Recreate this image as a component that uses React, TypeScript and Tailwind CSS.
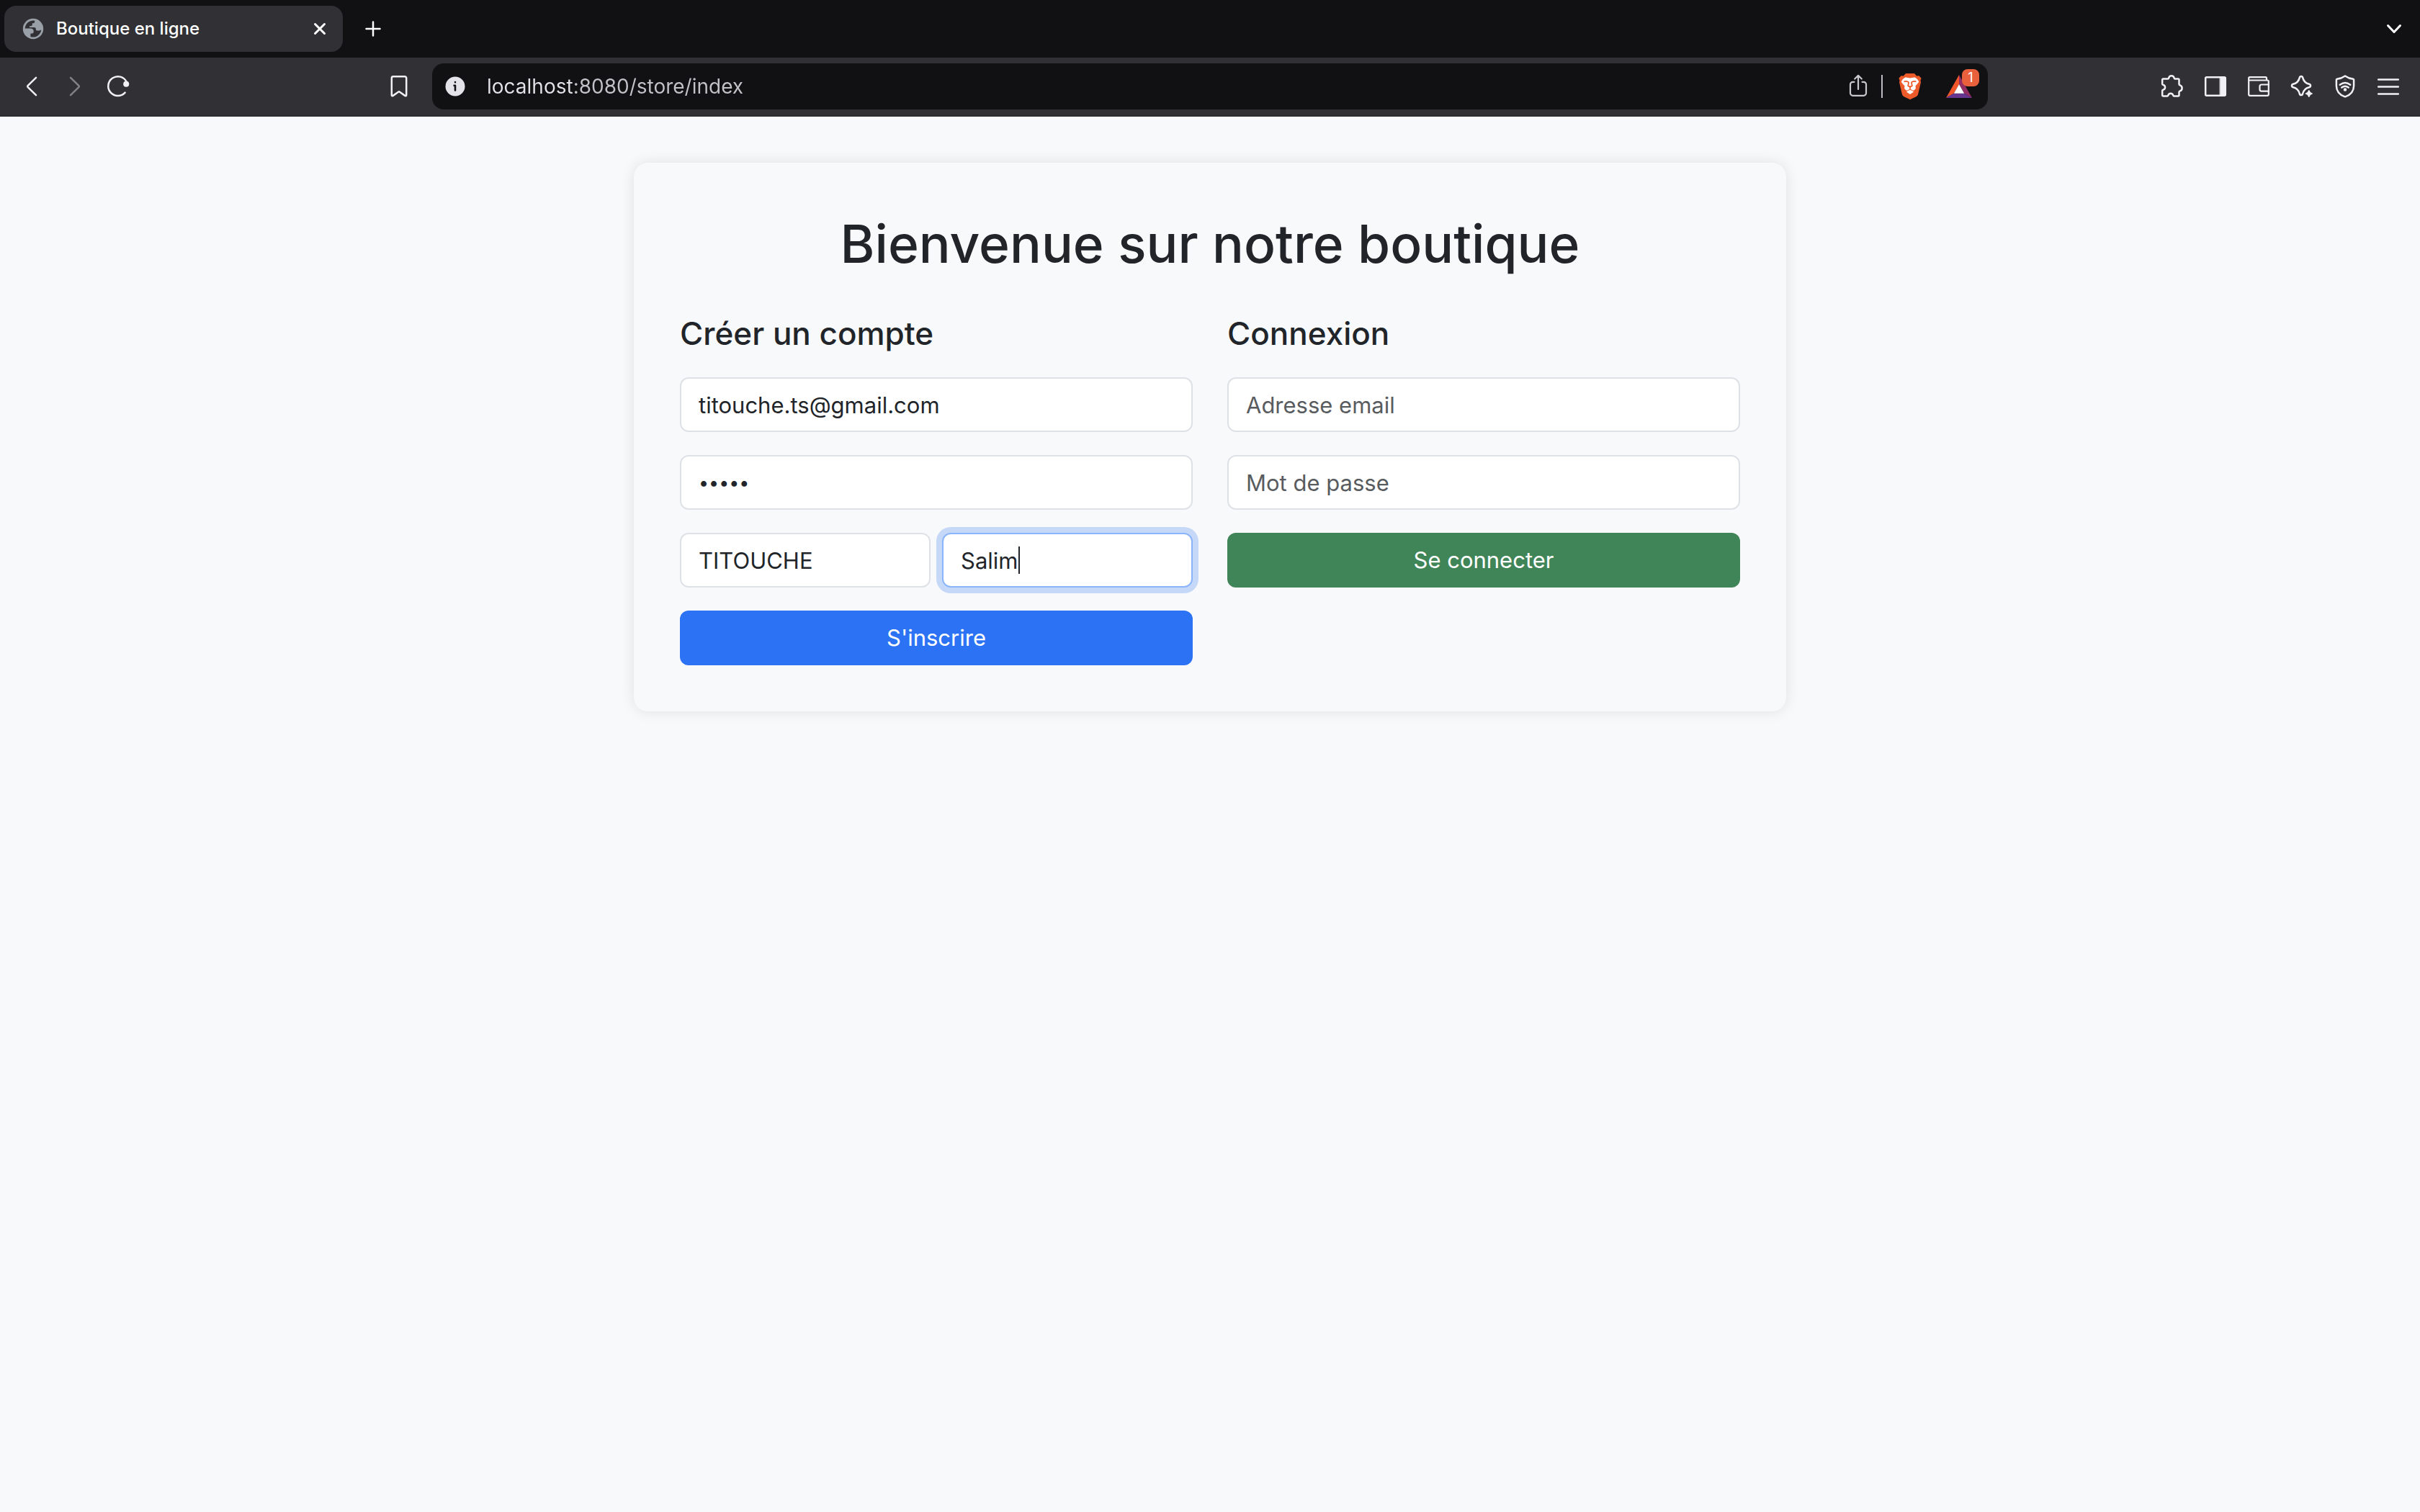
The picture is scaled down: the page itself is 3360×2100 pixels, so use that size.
import React from "react";

function Icon({ children }: { children: React.ReactNode }) {
  return (
    <svg
      viewBox="0 0 36 36"
      fill="none"
      stroke="currentColor"
      strokeWidth="2.5"
      strokeLinecap="round"
      strokeLinejoin="round"
      aria-hidden="true"
      className="block size-9 shrink-0"
    >
      {children}
    </svg>
  );
}

function TabStrip() {
  return (
    <div className="flex h-20 items-center bg-[#111113] pl-1.5 pr-4 text-white">
      <div className="flex h-16 w-[470px] items-center rounded-2xl bg-[#313035] pl-6 pr-4">
        <svg viewBox="0 0 32 32" aria-hidden="true" className="block size-8 shrink-0">
          <circle cx="16" cy="16" r="14.200" fill="#9aa0a8" />
          <path
            d="M4.600 15.600A11.500 11.500 0 0 1 18.200 4.800V6.400Q18 8 16.400 8.200H14.800V10.400Q14.600 12 12.800 12.200H11V14H17.600Q19.600 14.100 19.800 15.600V17.200Q20 18.400 21.600 18.500H24.600Q26.200 18.300 27.300 17.200A11.500 11.500 0 0 1 12.400 27V22.400H14.600Q16.800 22.200 16.800 19.400Q16.500 15.800 12.400 15.600Z"
            fill="#313035"
          />
        </svg>
        <span className="ml-4 flex-1 whitespace-nowrap text-2xl font-medium">Boutique en ligne</span>
        <button type="button" aria-label="Fermer l'onglet" className="grid size-8 place-items-center">
          <svg viewBox="0 0 20 20" stroke="currentColor" strokeWidth="3" strokeLinecap="round" aria-hidden="true" className="size-5">
            <path d="M3.500 3.500l13 13M16.500 3.500l-13 13" />
          </svg>
        </button>
      </div>
      <button type="button" aria-label="Nouvel onglet" className="ml-6 grid size-9 place-items-center">
        <svg viewBox="0 0 24 24" stroke="currentColor" strokeWidth="2.500" strokeLinecap="round" aria-hidden="true" className="size-6">
          <path d="M12 2.500v19M2.500 12h19" />
        </svg>
      </button>
      <button type="button" aria-label="Rechercher dans les onglets" className="ml-auto grid size-10 place-items-center">
        <svg viewBox="0 0 24 24" fill="none" stroke="currentColor" strokeWidth="3" strokeLinecap="round" strokeLinejoin="round" aria-hidden="true" className="size-6">
          <path d="M3.500 7.500L12 16.500l8.500-9" />
        </svg>
      </button>
    </div>
  );
}

function BraveLogo() {
  return (
    <svg viewBox="0 0 36 40" aria-hidden="true" className="block h-10 w-9">
      <path
        d="M12 2h12l3.200 3.600 3.200-.4 3.200 3.600-1.200 3 .6 2.400-3.800 16.200c-.5 1.900-1.400 2.900-2.700 3.800L19.500 37.600c-1 .7-2 .7-3 0L9.500 34.200c-1.300-.9-2.200-1.900-2.700-3.800L3 14.200l.6-2.400-1.200-3 3.200-3.600 3.200.4L12 2Z"
        fill="#ee5b2a"
      />
      <path
        d="M18 8.600c1.800 0 4.200-1.300 7-.9 2 .9 4.400 3.400 5.200 5.900-.6 1.700-3.800 4.800-4.600 5.800-.4 1 .6 1.900.3 3.200-.4 1.500-2.100 2.900-3.300 3.200-1.200-.2-2.400-1.300-3.500-1.700-.7-.3-1.500-.3-2.200 0-1.100.4-2.300 1.500-3.500 1.700-1.200-.3-2.900-1.700-3.300-3.200-.3-1.300.7-2.200.3-3.200-.8-1-4-4.100-4.600-5.800.8-2.500 3.200-5 5.200-5.900 2.800-.4 5.200.9 7 .9Z"
        fill="#fff"
      />
      <path d="M18 25c1.300 0 3.700 1.400 4.500 2 .3.300.3.600 0 .9L18 31l-4.500-3.100c-.3-.3-.3-.6 0-.9.800-.6 3.200-2 4.500-2Z" fill="#fff" />
      <path
        d="M9.500 13.500c2-.9 3.900-.6 5.800.3.700.4.800 1 .6 1.700l-.7 3.600c1.300.7 2.300 1.300 2.800 1.800.5-.5 1.500-1.100 2.800-1.800l-.7-3.600c-.2-.7-.1-1.300.6-1.700 1.900-.9 3.800-1.200 5.800-.3M18 20.900v2.900"
        fill="none"
        stroke="#ee5b2a"
        strokeWidth="1.800"
      />
    </svg>
  );
}

function RewardsLogo() {
  return (
    <svg viewBox="0 0 36 32" aria-hidden="true" className="block h-8 w-9">
      <path d="M18 0L0 32l11-6.500L18 13Z" fill="#f1562b" />
      <path d="M18 0v13l7 12.500L36 32Z" fill="#932d63" />
      <path d="M0 32h36l-11-6.500H11Z" fill="#65358f" />
      <path d="M18 13l7.200 12.800H10.800Z" fill="#fff" />
    </svg>
  );
}

function Toolbar() {
  return (
    <div className="grid h-[82px] grid-cols-[5fr_18fr_5fr] items-center border-b-2 border-[#2c2b30] bg-[#313035] text-[#f1f1f5]">
      <nav aria-label="Navigation" className="flex min-w-0 items-center gap-6 pl-[26px] pr-7">
        <button type="button" aria-label="Page précédente">
          <Icon>
            <path d="M24 5.800L12.500 17.200a1.200 1.200 0 0 0 0 1.600L24 30.200" />
          </Icon>
        </button>
        <button type="button" aria-label="Page suivante" disabled className="text-[#828186]">
          <Icon>
            <path d="M12 5.800L23.500 17.200a1.200 1.200 0 0 1 0 1.600L12 30.200" />
          </Icon>
        </button>
        <button type="button" aria-label="Actualiser">
          <Icon>
            <path d="M27.600 26.600A13.400 13.400 0 1 1 29.600 11.500" />
            <circle cx="29.200" cy="14.800" r="2.800" fill="currentColor" />
          </Icon>
        </button>
        <button type="button" aria-label="Ajouter un favori" className="ml-auto">
          <Icon>
            <path d="M10 4.300h16a2.200 2.200 0 0 1 2.200 2.200v23.800a1 1 0 0 1-1.600.8L19 25.800a1.500 1.500 0 0 0-2 0L9.400 31.100a1 1 0 0 1-1.600-.8V6.500A2.200 2.200 0 0 1 10 4.300Z" />
          </Icon>
        </button>
      </nav>

      <div className="flex h-16 min-w-0 items-center rounded-2xl bg-[#111113] pl-[18px] pr-[22px]">
        <svg viewBox="0 0 28 28" aria-hidden="true" className="block size-7 shrink-0">
          <circle cx="14" cy="14" r="13.500" fill="#e4e3e9" />
          <path d="M14 8v.3M12.600 12.800H14v6.700" fill="none" stroke="#111113" strokeWidth="2.600" strokeLinecap="round" strokeLinejoin="round" />
        </svg>
        <input
          aria-label="Adresse"
          type="text"
          defaultValue="localhost:8080/store/index"
          className="ml-[30px] min-w-0 flex-1 bg-[linear-gradient(90deg,#e4e3e9_120px,#c3c2c8_120px)] bg-clip-text text-[28px] leading-10 text-transparent caret-white outline-none"
        />
        <button type="button" aria-label="Partager" className="text-[#c9c8cd]">
          <Icon>
            <path d="M12.500 11.800h-2a3.500 3.500 0 0 0-3.500 3.500v12a3.500 3.500 0 0 0 3.500 3.500h15a3.500 3.500 0 0 0 3.500-3.500v-12a3.500 3.500 0 0 0-3.500-3.500h-2M18 22V2.800M13.200 7.500L18 2.800l4.800 4.700" strokeWidth="2.200" />
          </Icon>
        </button>
        <span className="ml-3.5 h-8 w-0.5 bg-[#bcbbc0]" />
        <button type="button" aria-label="Brave Shields" className="ml-5">
          <BraveLogo />
        </button>
        <button type="button" aria-label="Brave Rewards, 1 notification" className="relative ml-8">
          <RewardsLogo />
          <span className="absolute -right-2.5 -top-2 grid size-6 place-items-center rounded-lg bg-[#e9603c] text-lg leading-6 text-white">
            1
          </span>
        </button>
      </div>

      <div className="flex items-center justify-end gap-6 pr-[26px]">
        <button type="button" aria-label="Extensions">
          <Icon>
            <path d="M5.500 7.500h6.300q1.200 0 1.400-1.200a3.800 3.800 0 0 1 7.400 0q.2 1.200 1.400 1.200H26a1.500 1.500 0 0 1 1.500 1.500v5.800q0 1.200 1.200 1.600a4.200 4.200 0 0 1 0 8q-1.200.4-1.200 1.600v4a1.500 1.500 0 0 1-1.500 1.500h-5.600q-1-.1-1.200-1.200a3.500 3.500 0 0 0-6.800 0q-.2 1.100-1.200 1.200H5.700a1.500 1.500 0 0 1-1.500-1.500v-6q.1-1 1.200-1.300a3.500 3.500 0 0 0 0-6.800q-1.100-.3-1.200-1.300V8.800a1.300 1.300 0 0 1 1.300-1.300Z" />
          </Icon>
        </button>
        <button type="button" aria-label="Panneau latéral">
          <Icon>
            <rect x="4.200" y="5.200" width="27.600" height="25.600" rx="1.500" />
            <path d="M24.500 5.200h6.300a1 1 0 0 1 1 1v23.600a1 1 0 0 1-1 1h-6.300Z" fill="currentColor" strokeWidth="1" />
          </Icon>
        </button>
        <button type="button" aria-label="Portefeuille">
          <Icon>
            <path d="M4.200 10V6.700a1.500 1.500 0 0 1 1.500-1.500H27.500a1.500 1.500 0 0 1 1.500 1.500V9.500M4.200 9.500h26.100a1.500 1.500 0 0 1 1.500 1.500v18a1.800 1.800 0 0 1-1.800 1.800H6a1.800 1.800 0 0 1-1.800-1.800Z" strokeWidth="2.200" />
            <path d="M31.800 15.500H22a2.500 2.500 0 0 0-2.500 2.500v4.200a2.500 2.500 0 0 0 2.500 2.500h9.800" strokeWidth="2.200" />
          </Icon>
        </button>
        <button type="button" aria-label="Leo">
          <Icon>
            <path d="M17 4c1.100 0 1.900.7 2.200 1.900 1.200 5.100 3.800 7.700 8.900 8.900 1.200.3 1.900 1.100 1.900 2.200s-.7 1.900-1.900 2.200c-5.100 1.200-7.700 3.800-8.900 8.900-.3 1.200-1.100 1.900-2.200 1.900s-1.900-.7-2.200-1.900c-1.200-5.100-3.800-7.700-8.900-8.900C4.700 18.900 4 18.100 4 17s.7-1.900 1.900-2.200c5.100-1.200 7.700-3.800 8.900-8.900C15.100 4.700 15.900 4 17 4Z" />
            <path d="M27.800 23.500q1 3.600 4.600 4.500-3.600.9-4.600 4.500-1-3.600-4.600-4.500 3.600-.9 4.600-4.500Z" fill="currentColor" stroke="#313035" strokeWidth="5" />
            <path d="M27.800 23.500q1 3.600 4.600 4.500-3.600.9-4.600 4.500-1-3.600-4.600-4.500 3.600-.9 4.600-4.500Z" fill="currentColor" strokeWidth="1.200" />
          </Icon>
        </button>
        <button type="button" aria-label="VPN">
          <Icon>
            <path d="M18 3.500c3.600 2.500 7.300 3.900 11.200 4.300.6.100.9.500.9 1.100v8.300c0 7-4.600 12.300-11.300 15a2.200 2.200 0 0 1-1.600 0C10.500 29.500 5.900 24.200 5.900 17.200V8.900c0-.6.3-1 .9-1.100C10.700 7.400 14.400 6 18 3.500Z" />
            <path d="M10.800 15.800q7.200-5.600 14.400 0M13.300 19.600q4.700-3.600 9.400 0" />
            <circle cx="18" cy="22.600" r="1" fill="currentColor" />
          </Icon>
        </button>
        <button type="button" aria-label="Menu">
          <Icon>
            <path d="M4.200 8.500h27.600M4.200 18.500h27.600M4.200 28.500h27.600" />
          </Icon>
        </button>
      </div>
    </div>
  );
}

type FieldProps = React.InputHTMLAttributes<HTMLInputElement> & { label: string; focused?: boolean; small?: boolean };

function Field({ label, focused = false, small = false, ...props }: FieldProps) {
  return (
    <input
      aria-label={label}
      placeholder={label}
      className={`block h-[76px] w-full min-w-0 rounded-xl border-2 bg-white px-6 text-[#212529] outline-none placeholder:text-[#595c5f] ${
        small ? "text-[25px]" : "text-[31px]"
      } ${focused ? "border-[#8ab5fb] shadow-[0_0_0_8px_#c5d8f8]" : "border-[#dee2e6]"}`}
      {...props}
    />
  );
}

function SubmitButton({ className, children }: { className: string; children: React.ReactNode }) {
  return (
    <button type="submit" className={`h-[76px] w-full rounded-xl text-[31px] text-white ${className}`}>
      {children}
    </button>
  );
}

export default function App() {
  return (
    <div className="min-h-screen bg-[#f8f9fb] font-['Inter','Liberation_Sans',sans-serif] text-[#212529]">
      <header>
        <TabStrip />
        <Toolbar />
      </header>
      <main className="mx-auto mt-16 max-w-[1600px] rounded-[20px] p-16 shadow-[0_0_20px_rgba(0,0,0,0.1)]">
        <h1 className="text-center text-[73px] font-medium leading-[98px]">Bienvenue sur notre boutique</h1>
        <div className="mt-[46px] grid grid-cols-2 items-start gap-12">
          <form className="flex flex-col gap-8" onSubmit={(e) => e.preventDefault()}>
            <h2 className="text-[44px] font-medium leading-[58px]">Créer un compte</h2>
            <Field label="Adresse email" type="email" defaultValue="titouche.ts@gmail.com" />
            <Field label="Mot de passe" type="password" defaultValue="abcde" small />
            <div className="grid grid-cols-2 gap-4">
              <Field label="Nom" type="text" defaultValue="TITOUCHE" />
              <div className="relative">
                <Field label="Prénom" type="text" defaultValue="Salim" focused />
                <span className="pointer-events-none absolute left-[106px] top-[19px] h-[38px] w-0.5 bg-[#212529]" />
              </div>
            </div>
            <SubmitButton className="bg-[#2b72f5]">S'inscrire</SubmitButton>
          </form>
          <form className="flex flex-col gap-8" onSubmit={(e) => e.preventDefault()}>
            <h2 className="text-[44px] font-medium leading-[58px]">Connexion</h2>
            <Field label="Adresse email" type="email" />
            <Field label="Mot de passe" type="password" />
            <SubmitButton className="bg-[#408558]">Se connecter</SubmitButton>
          </form>
        </div>
      </main>
    </div>
  );
}
